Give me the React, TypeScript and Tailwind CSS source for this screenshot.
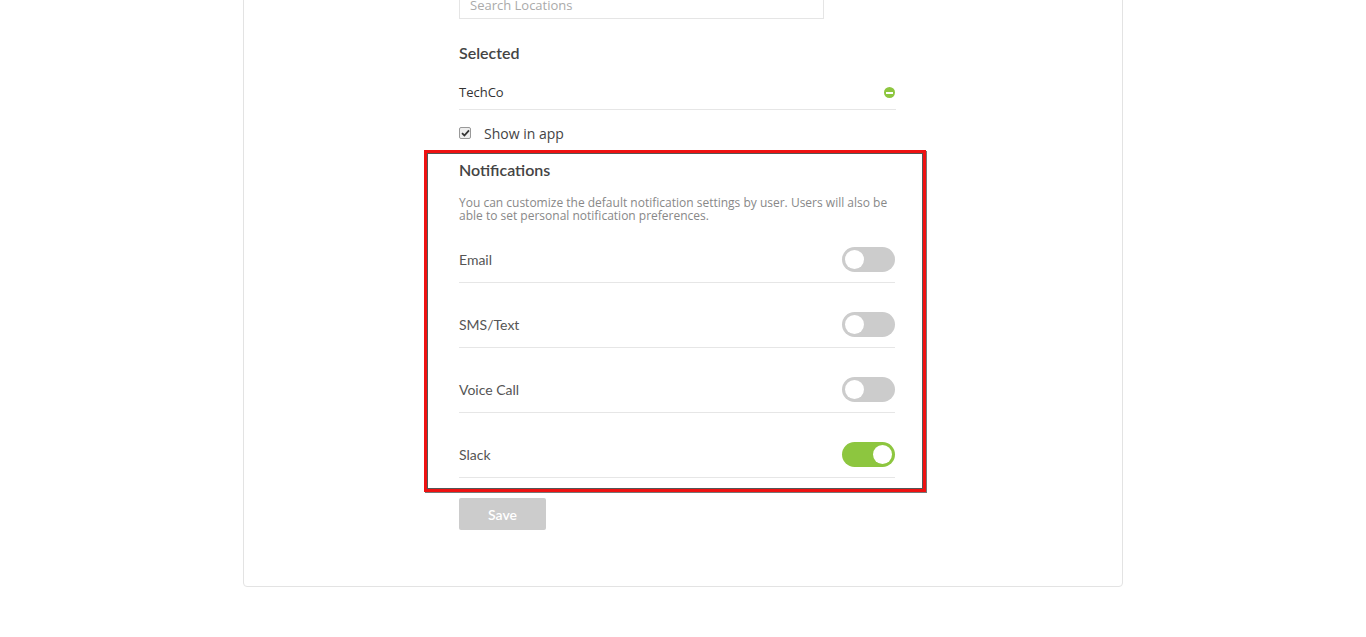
import React from "react";

function Toggle({ on }: { on?: boolean }) {
  return (
    <div
      className={
        "w-[53px] h-[25px] rounded-full flex items-center px-[3px] " +
        (on ? "bg-[#8dc63f] justify-end" : "bg-[#cccccc] justify-start")
      }
    >
      <div className="w-[19px] h-[19px] rounded-full bg-white" />
    </div>
  );
}

function Row({ label, on }: { label: string; on?: boolean }) {
  return (
    <div className="h-[65px] flex items-center justify-between border-b border-[#e6e6e6] pt-[19px]">
      <span className="text-[14px] text-[#555]">{label}</span>
      <Toggle on={on} />
    </div>
  );
}

export default function App() {
  return (
    <div
      className="w-[1366px] h-[637px] bg-white overflow-hidden"
      style={{ fontFamily: "'Lato', 'Open Sans', sans-serif" }}
    >
      <div className="mx-[243px] -mt-[24px] h-[611px] border border-[#e3e3e3] rounded-[4px] bg-white">
        <div className="ml-[215px] w-[437px]">
          <div className="w-[365px] h-[42px] border border-[#e5e5e5] flex items-end pb-[3px] px-[10px]">
            <span className="text-[13px] text-[#aaa]" style={{ fontFamily: "'Open Sans', sans-serif" }}>
              Search Locations
            </span>
          </div>
          <div className="mt-[24px] text-[16px] font-semibold text-[#444] leading-[20px]">Selected</div>
          <div className="mt-[13px] h-[34px] flex items-center justify-between border-b border-[#e6e6e6]">
            <span className="text-[13px] text-[#333]" style={{ fontFamily: "'Open Sans', sans-serif" }}>
              TechCo
            </span>
            <span className="w-[11px] h-[11px] rounded-full bg-[#8dc63f] flex items-center justify-center mr-[1px]">
              <span className="w-[7px] h-[2px] bg-white" />
            </span>
          </div>
          <div className="mt-[13px] flex items-center h-[20px]">
            <span className="w-[12px] h-[12px] rounded-[2px] border border-[#999] bg-[#eee] flex items-center justify-center">
              <svg width="9" height="8" viewBox="0 0 9 8">
                <path d="M1 4.2 L3.4 6.5 L8 1.3" stroke="#333" strokeWidth="1.8" fill="none" />
              </svg>
            </span>
            <span
              className="ml-[13px] text-[14px] text-[#444]"
              style={{ fontFamily: "'Open Sans', sans-serif" }}
            >
              Show in app
            </span>
          </div>
        </div>
        <div className="ml-[180px] mt-[7px] w-[502px] h-[342px] border-[3px] border-[#ee1111] shadow-[inset_0_0_0_1px_#555,1px_1px_0_0_#777]">
          <div className="ml-[32px] w-[436px] pt-[7px]">
            <div className="text-[16px] font-semibold text-[#444] leading-[20px]">Notifications</div>
            <div
              className="mt-[16px] text-[12px] text-[#888] leading-[13px]"
              style={{ fontFamily: "'Open Sans', sans-serif" }}
            >
              You can customize the default notification settings by user. Users will also be able to set
              personal notification preferences.
            </div>
            <div className="-mt-[4px]">
              <Row label="Email" />
              <Row label="SMS/Text" />
              <Row label="Voice Call" />
              <Row label="Slack" on />
            </div>
          </div>
        </div>
        <div className="ml-[215px] mt-[6px]">
          <button className="w-[87px] h-[32px] rounded-[2px] bg-[#cccccc] text-white text-[14px] font-semibold">
            Save
          </button>
        </div>
      </div>
    </div>
  );
}
